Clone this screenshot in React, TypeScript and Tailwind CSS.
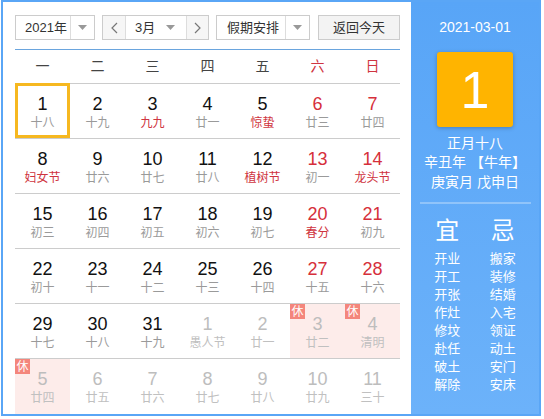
import React from "react";

type Day = {
  n: number;
  lunar: string;
  red?: boolean; // red number (weekend)
  fest?: boolean; // red lunar/festival text
  other?: boolean; // not in current month
  rest?: boolean; // holiday ("休")
  selected?: boolean;
};

const weeks: Day[][] = [
  [
    { n: 1, lunar: "十八", selected: true },
    { n: 2, lunar: "十九" },
    { n: 3, lunar: "九九", fest: true },
    { n: 4, lunar: "廿一" },
    { n: 5, lunar: "惊蛰", fest: true },
    { n: 6, lunar: "廿三", red: true },
    { n: 7, lunar: "廿四", red: true },
  ],
  [
    { n: 8, lunar: "妇女节", fest: true },
    { n: 9, lunar: "廿六" },
    { n: 10, lunar: "廿七" },
    { n: 11, lunar: "廿八" },
    { n: 12, lunar: "植树节", fest: true },
    { n: 13, lunar: "初一", red: true },
    { n: 14, lunar: "龙头节", red: true, fest: true },
  ],
  [
    { n: 15, lunar: "初三" },
    { n: 16, lunar: "初四" },
    { n: 17, lunar: "初五" },
    { n: 18, lunar: "初六" },
    { n: 19, lunar: "初七" },
    { n: 20, lunar: "春分", red: true, fest: true },
    { n: 21, lunar: "初九", red: true },
  ],
  [
    { n: 22, lunar: "初十" },
    { n: 23, lunar: "十一" },
    { n: 24, lunar: "十二" },
    { n: 25, lunar: "十三" },
    { n: 26, lunar: "十四" },
    { n: 27, lunar: "十五", red: true },
    { n: 28, lunar: "十六", red: true },
  ],
  [
    { n: 29, lunar: "十七" },
    { n: 30, lunar: "十八" },
    { n: 31, lunar: "十九" },
    { n: 1, lunar: "愚人节", other: true },
    { n: 2, lunar: "廿一", other: true },
    { n: 3, lunar: "廿二", other: true, rest: true },
    { n: 4, lunar: "清明", other: true, rest: true },
  ],
  [
    { n: 5, lunar: "廿四", other: true, rest: true },
    { n: 6, lunar: "廿五", other: true },
    { n: 7, lunar: "廿六", other: true },
    { n: 8, lunar: "廿七", other: true },
    { n: 9, lunar: "廿八", other: true },
    { n: 10, lunar: "廿九", other: true },
    { n: 11, lunar: "三十", other: true },
  ],
];

const good = ["开业", "开工", "开张", "作灶", "修坟", "赴任", "破土", "解除"];
const bad = ["搬家", "装修", "结婚", "入宅", "领证", "动土", "安门", "安床"];

function Caret() {
  return (
    <svg width="9" height="5" viewBox="0 0 9 5">
      <path d="M0 0h9L4.5 5z" fill="#999" />
    </svg>
  );
}

function Chevron({ dir }: { dir: "left" | "right" }) {
  return (
    <svg width="7" height="12" viewBox="0 0 7 12">
      <polyline
        points={dir === "left" ? "6,1 1,6 6,11" : "1,1 6,6 1,11"}
        fill="none"
        stroke="#777"
        strokeWidth="1.2"
      />
    </svg>
  );
}

function Cell({ d }: { d: Day }) {
  const numColor = d.other ? "text-[#bdbdbd]" : d.red ? "text-[#d62f3b]" : "text-[#111]";
  const lunarColor = d.other ? "text-[#c0c0c0]" : d.fest ? "text-[#cf3440]" : "text-[#9a9a9a]";
  return (
    <div className={`relative flex flex-col items-center pt-[9px] ${d.rest ? "bg-[#fdecea]" : ""}`}>
      {d.rest && (
        <span className="absolute left-0 top-0 flex h-[15px] w-[15px] items-center justify-center bg-[#f4867c] text-[12px] leading-none text-white">
          休
        </span>
      )}
      {d.selected && (
        <span className="pointer-events-none absolute inset-x-0 -top-px bottom-0 border-[3px] border-[#f6b820]" />
      )}
      <span className={`text-[18px] leading-[22px] ${numColor}`}>{d.n}</span>
      <span className={`text-[12px] leading-[16px] ${lunarColor}`}>{d.lunar}</span>
    </div>
  );
}

export default function App() {
  return (
    <div
      className="ml-px flex h-[416px] w-[540px] border-2 border-[#5aa6f6] bg-white"
      style={{ fontFamily: '"Liberation Sans", "Noto Sans CJK SC", sans-serif' }}
    >
      {/* Calendar */}
      <div className="flex w-[408px] flex-col pl-[12px] pr-[11px] pt-[13px]">
        {/* Toolbar */}
        <div className="flex h-[25px] items-stretch whitespace-nowrap text-[13px] text-[#333]">
          <div className="flex w-[80px] border border-[#ccc]">
            <span className="flex flex-1 items-center pl-[9px]">2021年</span>
            <span className="flex w-[24px] items-center justify-center border-l border-[#ddd]">
              <Caret />
            </span>
          </div>
          <div className="ml-[7px] flex w-[107px] border border-[#ccc]">
            <span className="flex w-[23px] items-center justify-center border-r border-[#ddd] bg-[#f6f6f6]">
              <Chevron dir="left" />
            </span>
            <span className="flex flex-1 items-center pl-[9px]">3月</span>
            <span className="flex w-[20px] items-center justify-start">
              <Caret />
            </span>
            <span className="flex w-[22px] items-center justify-center border-l border-[#ddd] bg-[#f6f6f6]">
              <Chevron dir="right" />
            </span>
          </div>
          <div className="ml-[7px] flex w-[94px] border border-[#ccc]">
            <span className="flex flex-1 items-center pl-[10px]">假期安排</span>
            <span className="flex w-[24px] items-center justify-center border-l border-[#ddd]">
              <Caret />
            </span>
          </div>
          <div className="ml-[8px] flex w-[82px] items-center justify-center border border-[#ccc] bg-[#f3f3f3]">
            返回今天
          </div>
        </div>

        <div className="mt-[9px] h-px bg-[#6aa5de]" />

        {/* Week header */}
        <div className="grid h-[34px] grid-cols-7 border-b border-[#ccc] text-[14px]">
          {["一", "二", "三", "四", "五", "六", "日"].map((w, i) => (
            <div
              key={w}
              className={`flex items-center justify-center ${i >= 5 ? "text-[#cf3440]" : "text-[#444]"}`}
            >
              {w}
            </div>
          ))}
        </div>

        {/* Days */}
        {weeks.map((week, wi) => (
          <div
            key={wi}
            className={`grid h-[55px] grid-cols-7 ${wi < weeks.length - 1 ? "border-b border-[#ccc]" : ""}`}
          >
            {week.map((d, di) => (
              <Cell key={di} d={d} />
            ))}
          </div>
        ))}
      </div>

      {/* Side panel */}
      <div className="flex flex-1 flex-col items-center bg-gradient-to-b from-[#58a5f7] to-[#6cb2fa] pt-[15px] text-white">
        <div className="text-[14px] leading-[20px]">2021-03-01</div>
        <div className="mt-[15px] flex h-[75px] w-[76px] items-center justify-center rounded-[3px] bg-[#ffb400] text-[52px] leading-none shadow-[0_1px_4px_rgba(0,0,0,0.25)]">
          1
        </div>
        <div className="mt-[6px] text-[14px] leading-[20px]">正月十八</div>
        <div className="text-[14px] leading-[19px]">辛丑年 【牛年】</div>
        <div className="text-[14px] leading-[20px]">庚寅月 戊申日</div>
        <div className="mt-[10px] h-[2px] w-[111px] bg-[#90c4fa]" />
        <div className="mt-[12px] flex w-[111px] justify-around">
          <div className="flex flex-col items-center">
            <span className="text-[24px] leading-[30px]">宜</span>
            <div className="mt-[4px] flex flex-col items-center text-[13px] leading-[18px]">
              {good.map((g) => (
                <span key={g}>{g}</span>
              ))}
            </div>
          </div>
          <div className="flex flex-col items-center">
            <span className="text-[24px] leading-[30px]">忌</span>
            <div className="mt-[4px] flex flex-col items-center text-[13px] leading-[18px]">
              {bad.map((g) => (
                <span key={g}>{g}</span>
              ))}
            </div>
          </div>
        </div>
      </div>
    </div>
  );
}
